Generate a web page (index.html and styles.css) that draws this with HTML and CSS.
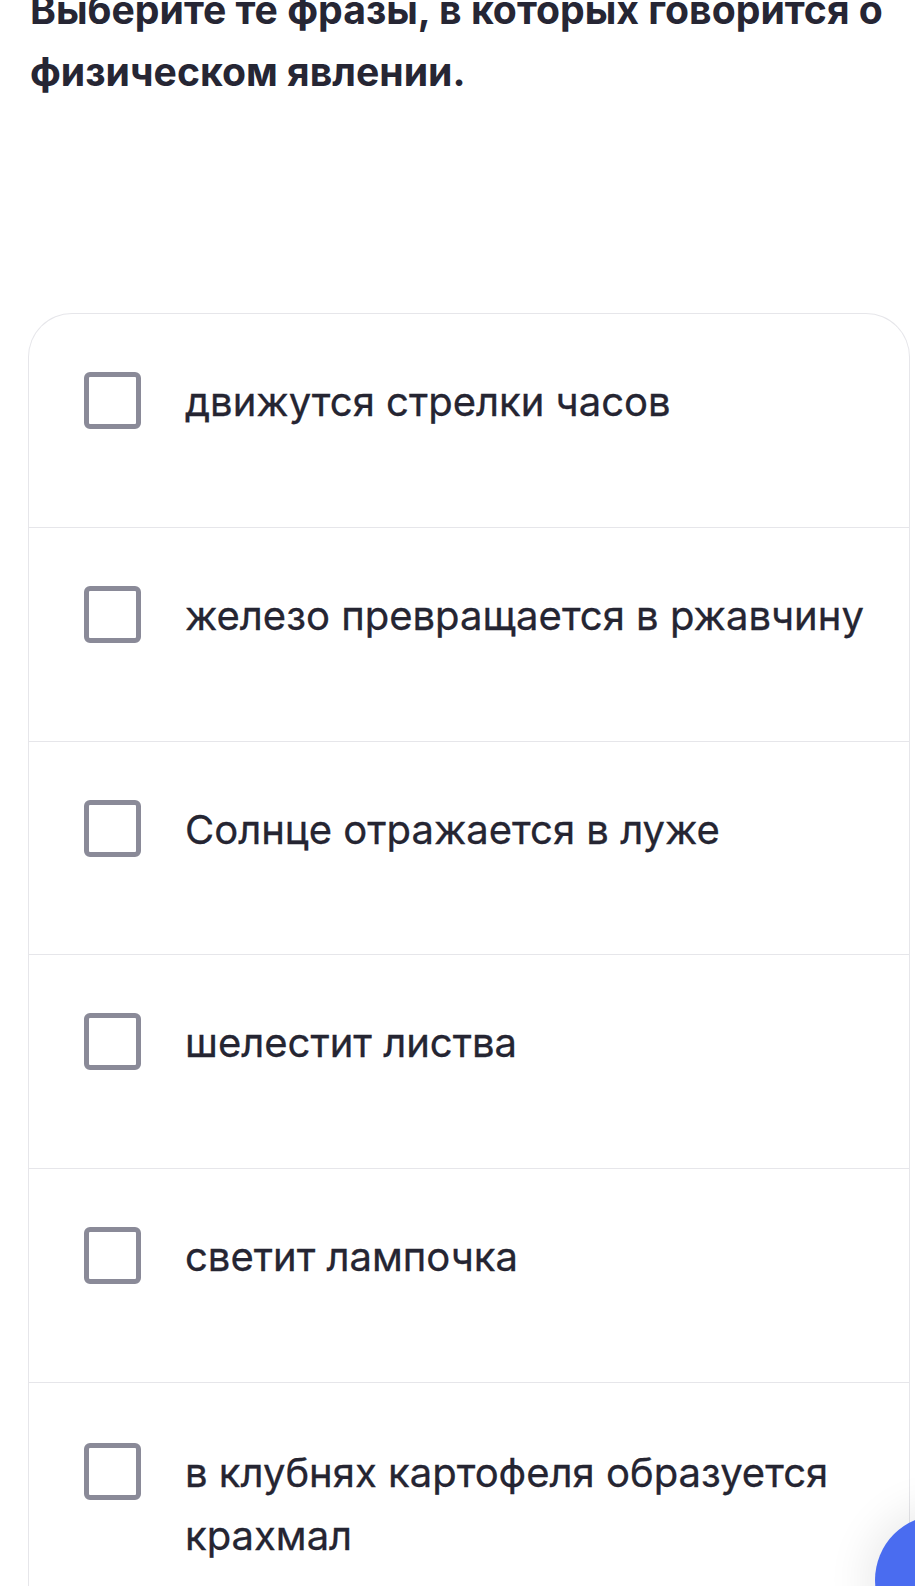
FILE: index.html
```html
<!DOCTYPE html>
<html lang="ru">
<head>
<meta charset="utf-8">
<title>Вопрос</title>
<link rel="stylesheet" href="styles.css">
</head>
<body>
<main class="page">
  <h1 class="question">Выберите те фразы, в которых говорится о физическом явлении.</h1>
  <ul class="options">
    <li class="option"><span class="checkbox"></span><span class="label">движутся стрелки часов</span></li>
    <li class="option"><span class="checkbox"></span><span class="label">железо превращается в ржавчину</span></li>
    <li class="option"><span class="checkbox"></span><span class="label">Солнце отражается в луже</span></li>
    <li class="option"><span class="checkbox"></span><span class="label">шелестит листва</span></li>
    <li class="option"><span class="checkbox"></span><span class="label">светит лампочка</span></li>
    <li class="option option--multiline"><span class="checkbox"></span><span class="label">в клубнях картофеля образуется крахмал</span></li>
  </ul>
</main>
<div class="fab"></div>
</body>
</html>
```
FILE: styles.css
```css
html, body {
  margin: 0;
  padding: 0;
  background: #ffffff;
  overflow: hidden;
}
body {
  width: 915px;
  height: 1586px;
  font-family: Inter, "Noto Sans", sans-serif;
  color: #252532;
}
.page {
  padding-left: 30px;
}
.question {
  margin: -20.6px 0 0 0;
  font-size: 39.2px;
  line-height: 62px;
  font-weight: 700;
  color: #262634;
  width: 875px;
}
.options {
  list-style: none;
  margin: 209.6px 0 0 -2px;
  padding: 0;
  width: 880px;
  border: 1px solid #e6e6ea;
  border-bottom: none;
  border-radius: 44px 44px 0 0;
}
.option {
  display: flex;
  align-items: flex-start;
  gap: 44px;
  box-sizing: border-box;
  height: 213.8px;
  padding: 56px 0 0 55px;
  border-bottom: 1px solid #e6e6ea;
}
.option--multiline {
  padding-top: 58px;
  height: 260px;
}
.checkbox {
  flex: none;
  width: 57px;
  height: 57px;
  box-sizing: border-box;
  margin-top: 2px;
  border: 5px solid #8a8a98;
  border-radius: 6px;
  background: #ffffff;
}
.label {
  font-size: 40px;
  line-height: 63px;
  font-weight: 400;
  color: #252532;
  padding-right: 30px;
  -webkit-text-stroke: 0.3px #252532;
}
.fab {
  position: fixed;
  left: 875px;
  top: 1515px;
  width: 130px;
  height: 130px;
  border-radius: 50%;
  background: #4a6cf0;
  box-shadow: 0 0 40px 10px rgba(0, 0, 0, 0.08);
}
```
